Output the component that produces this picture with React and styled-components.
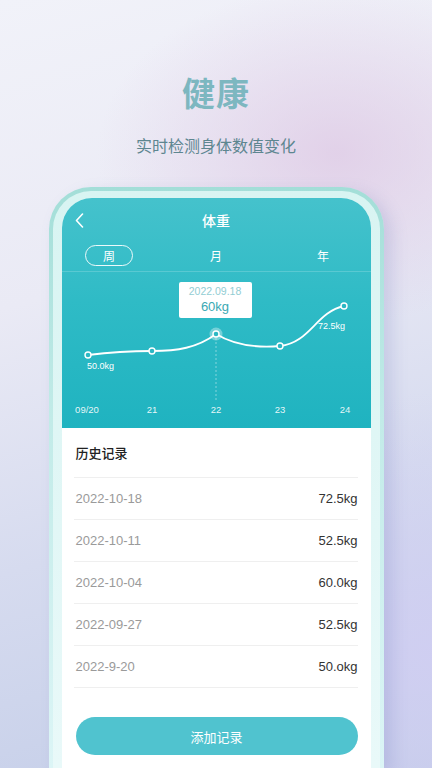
import React from "react";
import styled, { createGlobalStyle } from "styled-components";

const GlobalStyle = createGlobalStyle`
  html, body { margin: 0; padding: 0; }
  body { font-family: "Liberation Sans", "Noto Sans CJK SC", sans-serif; }
  * { box-sizing: border-box; }
`;

const Page = styled.div`
  width: 432px;
  height: 768px;
  overflow: hidden;
  display: flex;
  flex-direction: column;
  align-items: center;
  background:
    radial-gradient(ellipse 240px 170px at 78% 20%, rgba(222, 200, 228, 0.75), rgba(222, 200, 228, 0) 100%),
    radial-gradient(ellipse 300px 260px at 100% 85%, rgba(208, 206, 242, 0.9), rgba(208, 206, 242, 0) 100%),
    linear-gradient(165deg, #f1f2f9 0%, #eaeaf5 35%, #d6dbef 65%, #c3cde8 100%);
`;

const Headline = styled.h1`
  margin: 70px 0 0;
  font-size: 33px;
  line-height: 44px;
  font-weight: 700;
  color: #7db7c0;
  letter-spacing: 1px;
  font-family: "Noto Sans CJK SC", sans-serif;
`;

const Subtitle = styled.p`
  margin: 20px 0 0;
  font-size: 16px;
  line-height: 22px;
  color: #5d8690;
  font-family: "Noto Sans CJK SC", sans-serif;
`;

const Frame = styled.div`
  margin-top: 31px;
  width: 335px;
  flex: 1;
  padding: 4px 4px 0;
  border-radius: 42px 42px 0 0;
  background: linear-gradient(180deg, #a3ded8 0%, #c2ebe8 40%, #dcf5f6 100%);
  box-shadow: 8px 6px 16px rgba(110, 118, 180, 0.22);
  display: flex;
`;

const InnerRing = styled.div`
  flex: 1;
  padding: 7px 9px 0;
  border-radius: 38px 38px 0 0;
  background: linear-gradient(180deg, #d8f4f2 0%, #e9f9f9 100%);
  display: flex;
`;

const Screen = styled.div`
  flex: 1;
  border-radius: 30px 30px 0 0;
  overflow: hidden;
  background: #ffffff;
  display: flex;
  flex-direction: column;
`;

const Header = styled.div`
  background: linear-gradient(180deg, #45c2cc 0%, #2fbbc6 45%, #1fb3c0 100%);
  color: #fff;
`;

const TitleBar = styled.div`
  height: 44px;
  display: flex;
  align-items: center;
  justify-content: center;
  position: relative;
`;

const Title = styled.span`
  font-size: 14px;
  font-weight: 500;
  font-family: "Noto Sans CJK SC", sans-serif;
`;

const Back = styled.svg`
  position: absolute;
  left: 13px;
  top: 15px;
`;

const Tabs = styled.div`
  display: grid;
  grid-template-columns: repeat(3, 1fr);
  margin: 0 -6px;
  height: 30px;
  padding-bottom: 3px;
  align-items: center;
  justify-items: center;
  border-bottom: 1px solid rgba(255, 255, 255, 0.18);
`;

const Tab = styled.span`
  width: 48px;
  height: 21px;
  display: flex;
  align-items: center;
  justify-content: center;
  border-radius: 11px;
  font-size: 12px;
  font-family: "Noto Sans CJK SC", sans-serif;
  border: 1.5px solid ${(p) => (p.$active ? "rgba(255,255,255,0.9)" : "transparent")};
`;

const Chart = styled.div`
  position: relative;
  height: 156px;
`;

const Tooltip = styled.div`
  position: absolute;
  left: 117px;
  top: 10px;
  width: 73px;
  height: 36px;
  background: #fff;
  border-radius: 2px;
  display: flex;
  flex-direction: column;
  align-items: center;
  justify-content: center;
  gap: 1px;
`;

const TipDate = styled.span`
  font-size: 10.5px;
  color: #93cdd3;
  line-height: 13px;
`;

const TipValue = styled.span`
  font-size: 13px;
  color: #3aa9b4;
  line-height: 16px;
`;

const History = styled.div`
  padding: 0 13px 0 12px;
  display: flex;
  flex-direction: column;
`;

const SectionTitle = styled.div`
  height: 50px;
  display: flex;
  align-items: center;
  padding-left: 2px;
  font-size: 13px;
  font-weight: 500;
  color: #222;
  border-bottom: 1px solid #efefef;
  font-family: "Noto Sans CJK SC", sans-serif;
`;

const Row = styled.div`
  height: 42px;
  display: flex;
  align-items: center;
  justify-content: space-between;
  padding: 0 0 0 2px;
  border-bottom: 1px solid #efefef;
  font-size: 13px;
`;

const DateText = styled.span`
  color: #9a9a9a;
`;

const Weight = styled.span`
  color: #333;
`;

const AddButton = styled.button`
  margin: 29px 0 0 2px;
  height: 38px;
  border: none;
  border-radius: 19px;
  background: #50c3cf;
  color: #fff;
  font-size: 13px;
  font-family: "Noto Sans CJK SC", sans-serif;
`;

const points = [
  [26, 83],
  [90, 79],
  [154, 62],
  [218, 74],
  [282, 34],
];

const records = [
  ["2022-10-18", "72.5kg"],
  ["2022-10-11", "52.5kg"],
  ["2022-10-04", "60.0kg"],
  ["2022-09-27", "52.5kg"],
  ["2022-9-20", "50.okg"],
];

const axis = [
  [25, "09/20"],
  [90, "21"],
  [154, "22"],
  [218, "23"],
  [283, "24"],
];

export default function App() {
  return (
    <Page>
      <GlobalStyle />
      <Headline>健康</Headline>
      <Subtitle>实时检测身体数值变化</Subtitle>
      <Frame>
        <InnerRing>
          <Screen>
            <Header>
              <TitleBar>
                <Back width="9" height="15" viewBox="0 0 9 15">
                  <path d="M7.5 1 L1.5 7.5 L7.5 14" fill="none" stroke="#fff" strokeWidth="1.6" strokeLinecap="round" strokeLinejoin="round" />
                </Back>
                <Title>体重</Title>
              </TitleBar>
              <Tabs>
                <Tab $active>周</Tab>
                <Tab>月</Tab>
                <Tab>年</Tab>
              </Tabs>
              <Chart>
                <svg width="308" height="156" viewBox="0 0 308 156" style={{ display: "block" }}>
                  <line x1="154" y1="62" x2="154" y2="130" stroke="rgba(255,255,255,0.55)" strokeWidth="0.8" strokeDasharray="2 2" />
                  <path
                    d="M26,83 C50,80 70,79 90,79 C115,79 135,76 154,62 C172,73 195,76 218,74 C248,71 254,40 282,34"
                    fill="none"
                    stroke="#fff"
                    strokeWidth="1.8"
                  />
                  <circle cx="154" cy="62" r="6.5" fill="rgba(255,255,255,0.35)" />
                  {points.map(([x, y], i) => (
                    <circle key={i} cx={x} cy={y} r="3" fill="#2cb8c4" stroke="#fff" strokeWidth="1.4" />
                  ))}
                  <text x="25" y="97" fontSize="9" fill="#fff" fontFamily="Liberation Sans, sans-serif">50.0kg</text>
                  <text x="256" y="57" fontSize="9" fill="#fff" fontFamily="Liberation Sans, sans-serif">72.5kg</text>
                  {axis.map(([x, t]) => (
                    <text key={t} x={x} y="141" fontSize="9.5" fill="rgba(255,255,255,0.9)" textAnchor="middle" fontFamily="Liberation Sans, sans-serif">
                      {t}
                    </text>
                  ))}
                </svg>
                <Tooltip>
                  <TipDate>2022.09.18</TipDate>
                  <TipValue>60kg</TipValue>
                </Tooltip>
              </Chart>
            </Header>
            <History>
              <SectionTitle>历史记录</SectionTitle>
              {records.map(([d, w]) => (
                <Row key={d}>
                  <DateText>{d}</DateText>
                  <Weight>{w}</Weight>
                </Row>
              ))}
              <AddButton>添加记录</AddButton>
            </History>
          </Screen>
        </InnerRing>
      </Frame>
    </Page>
  );
}
